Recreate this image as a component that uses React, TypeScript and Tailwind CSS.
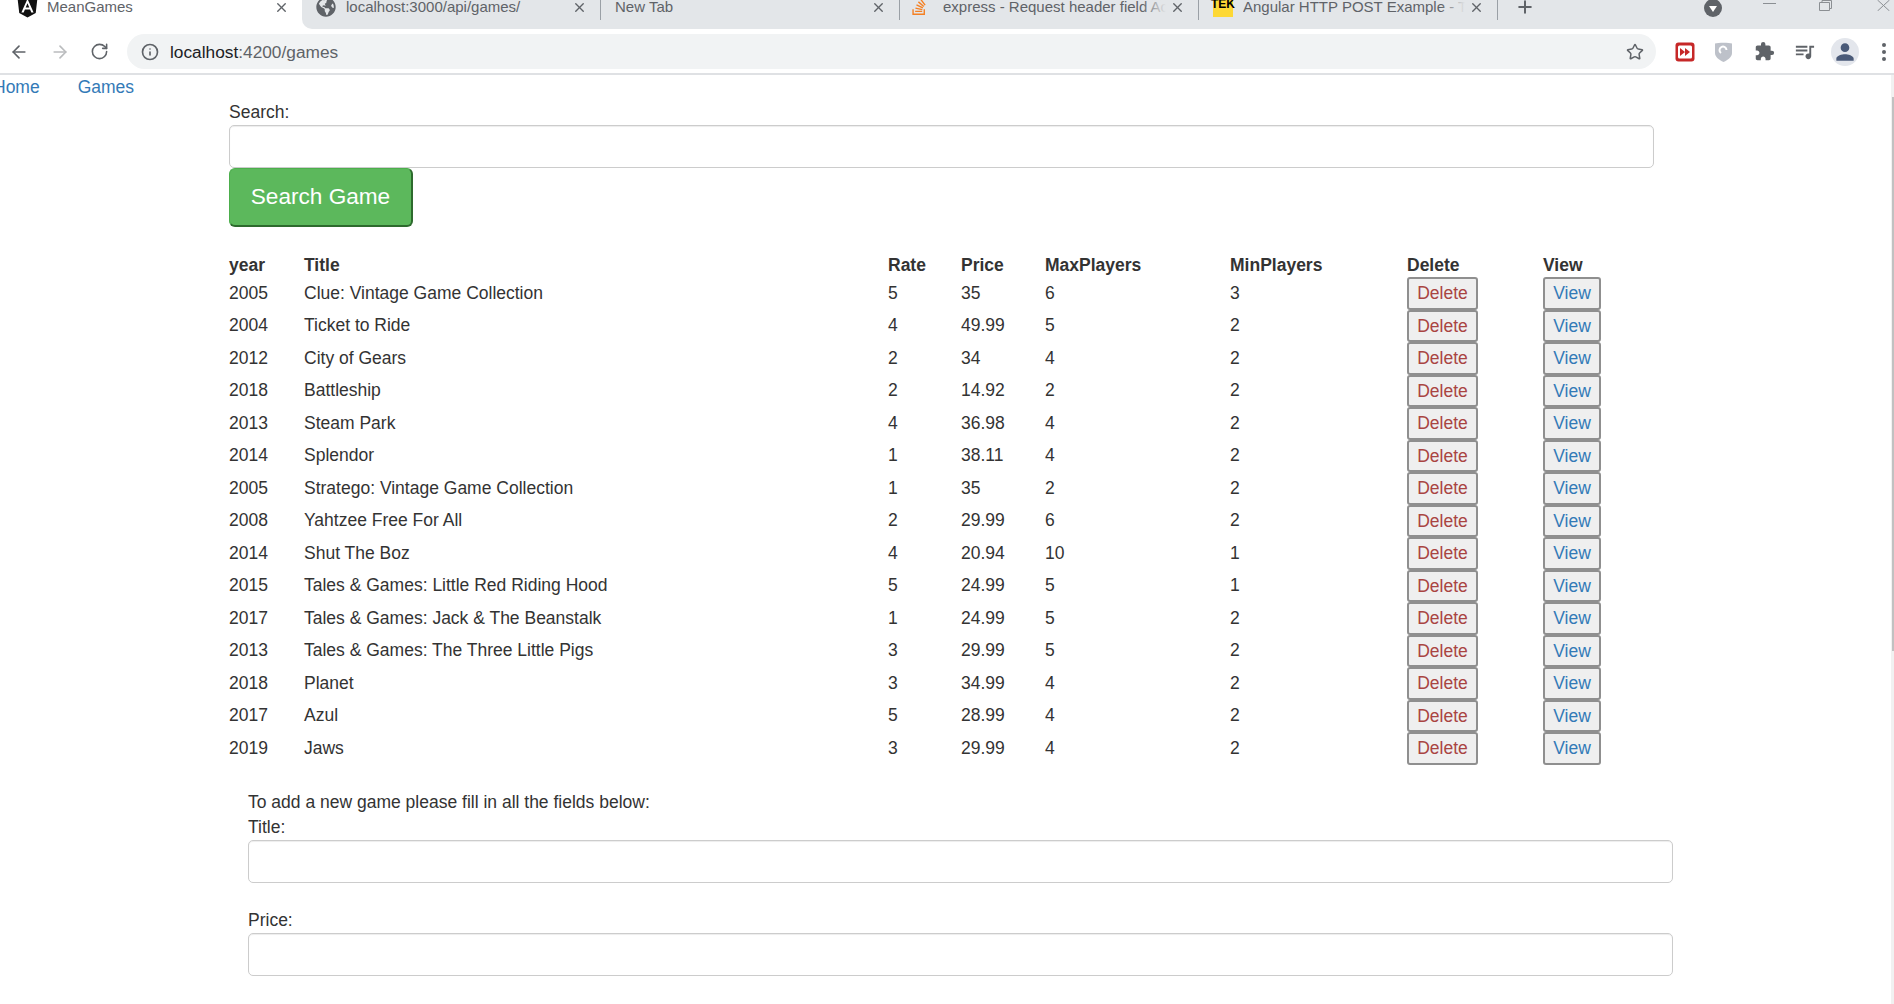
import type { ReactNode } from 'react'
import { ArrowLeft, ArrowRight, Info, Plus, RotateCw, Star, X } from 'lucide-react'
import { FaAngular, FaGlobeAmericas, FaStackOverflow } from 'react-icons/fa'
import { MdExtension, MdPerson, MdQueueMusic } from 'react-icons/md'

const games = [
  ['2005', 'Clue: Vintage Game Collection', '5', '35', '6', '3'],
  ['2004', 'Ticket to Ride', '4', '49.99', '5', '2'],
  ['2012', 'City of Gears', '2', '34', '4', '2'],
  ['2018', 'Battleship', '2', '14.92', '2', '2'],
  ['2013', 'Steam Park', '4', '36.98', '4', '2'],
  ['2014', 'Splendor', '1', '38.11', '4', '2'],
  ['2005', 'Stratego: Vintage Game Collection', '1', '35', '2', '2'],
  ['2008', 'Yahtzee Free For All', '2', '29.99', '6', '2'],
  ['2014', 'Shut The Boz', '4', '20.94', '10', '1'],
  ['2015', 'Tales & Games: Little Red Riding Hood', '5', '24.99', '5', '1'],
  ['2017', 'Tales & Games: Jack & The Beanstalk', '1', '24.99', '5', '2'],
  ['2013', 'Tales & Games: The Three Little Pigs', '3', '29.99', '5', '2'],
  ['2018', 'Planet', '3', '34.99', '4', '2'],
  ['2017', 'Azul', '5', '28.99', '4', '2'],
  ['2019', 'Jaws', '3', '29.99', '4', '2'],
]

function Tab({ title, icon, pad, gap, last, fade }: { title: string; icon?: ReactNode; pad: string; gap: string; last?: boolean; fade?: boolean }) {
  return (
    <div className={`flex h-[20px] w-[299px] shrink-0 items-start pr-[13px] ${pad} ${last ? '' : 'border-r border-[#9aa0a6]'}`}>
      <div className="flex h-[14px] w-full items-center">
        {icon}
        <div className={`flex min-w-0 flex-1 overflow-hidden whitespace-nowrap text-[15px] text-[#5f6368] ${gap}`}>
          <span>{title}</span>
        </div>
        {fade && <span className="relative -ml-[24px] h-[14px] w-[24px] shrink-0 bg-gradient-to-r from-transparent to-[#e3e6e9]" />}
        <X className="ml-[4px] h-[15px] w-[15px] shrink-0 text-[#5f6368]" strokeWidth={2.2} />
      </div>
    </div>
  )
}

function TabStrip() {
  return (
    <div className="flex h-[29px] shrink-0 overflow-hidden bg-white">
      <div className="flex h-[14px] w-[302px] shrink-0 items-center pl-[17px] pr-[13px]">
        <FaAngular className="h-[24px] w-[21px] shrink-0 text-[#111]" />
        <span className="ml-[9px] flex-1 text-[15px] text-[#5f6368]">MeanGames</span>
        <X className="h-[15px] w-[15px] text-[#5f6368]" strokeWidth={2.2} />
      </div>
      <div className="relative flex min-w-0 flex-1 rounded-bl-[10px] bg-[#e3e6e9]">
        <Tab title="localhost:3000/api/games/" pad="pl-[14px]" gap="ml-[10px]" icon={<FaGlobeAmericas className="h-[20px] w-[20px] shrink-0 text-[#5f6368]" />} />
        <Tab title="New Tab" pad="pl-[14px]" gap="" />
        <Tab title="express - Request header field Access" pad="pl-[10px]" gap="ml-[15px]" fade icon={<FaStackOverflow className="h-[18px] w-[18px] shrink-0 text-[#f48024]" />} />
        <Tab
          title="Angular HTTP POST Example - TekTutorials"
          pad="pl-[14px]"
          gap="ml-[10px]"
          fade
          icon={
            <span className="flex h-[20px] w-[20px] shrink-0 items-start justify-center bg-[#fdd835] text-[12px] font-bold leading-[14px] text-black">
              TEK
            </span>
          }
        />
        <div className="flex h-[14px] items-center pl-[17px]">
          <Plus className="h-[20px] w-[20px] text-[#5f6368]" strokeWidth={2.4} />
        </div>
        <div className="ml-auto flex h-[14px] items-center">
          <svg viewBox="0 0 18 18" className="mb-[-2px] h-[18px] w-[18px]">
            <circle cx="9" cy="9" r="9" fill="#5f6368" />
            <path d="M5 7h8l-4 6z" fill="#fff" />
          </svg>
          <svg viewBox="0 0 13 10" className="ml-[41px] mt-[-6px] h-[10px] w-[13px]">
            <path d="M0 4.5h13" stroke="#8b8f93" strokeWidth="1" />
          </svg>
          <svg viewBox="0 0 13 11" className="ml-[43px] mt-[-4px] h-[11px] w-[13px]">
            <path d="M0.5 2.5h10v8h-10zM3 2.5v-2h9.5v8h-2" fill="none" stroke="#8b8f93" strokeWidth="1" />
          </svg>
          <svg viewBox="0 0 13 11" className="ml-[45px] mr-[4px] mt-[-4px] h-[11px] w-[13px]">
            <path d="M0.5 0l12 11M12.5 0l-12 11" stroke="#8b8f93" strokeWidth="1" />
          </svg>
        </div>
      </div>
    </div>
  )
}

function Toolbar() {
  return (
    <div className="flex h-[46px] shrink-0 items-start border-b-2 border-[#dfe1e4] bg-white pt-[5px]">
      <div className="flex h-[35px] w-[127px] shrink-0 items-center">
        <ArrowLeft className="ml-[9px] h-[20px] w-[20px] text-[#5f6368]" strokeWidth={2} />
        <ArrowRight className="ml-[21px] h-[20px] w-[20px] text-[#babcbe]" strokeWidth={2} />
        <RotateCw className="ml-[20px] h-[19px] w-[19px] text-[#5f6368]" strokeWidth={2} />
      </div>
      <div className="flex h-[35px] w-[1529px] shrink-0 items-center rounded-full bg-[#f1f3f4] pl-[14px] pr-[12px]">
        <Info className="h-[18px] w-[18px] text-[#5f6368]" strokeWidth={2.2} />
        <span className="ml-[11px] flex-1 whitespace-nowrap text-[17.3px] text-[#5f6368]">
          <span className="text-[#202124]">localhost</span>:4200/games
        </span>
        <Star className="h-[18px] w-[18px] text-[#5f6368]" strokeWidth={2} />
      </div>
      <div className="flex h-[35px] items-center">
        <svg viewBox="0 0 20 20" className="ml-[19px] h-[20px] w-[20px]">
          <rect x="0.5" y="0.5" width="19" height="19" rx="3" fill="#c62828" />
          <rect x="3" y="3.5" width="14" height="13" rx="1.5" fill="#fff" />
          <path d="M5 6l5 4-5 4zM10 6l5 4-5 4z" fill="#c62828" />
        </svg>
        <svg viewBox="0 0 17 20" className="ml-[20px] h-[20px] w-[17px]">
          <path d="M0 1.5C3 .5 14 .5 17 1.5V11c0 4-4 7-8.5 9C4 18 0 15 0 11z" fill="#bdc1c9" />
          <path d="M6 11a3.5 3.5 0 1 1 5.5-3" fill="none" stroke="#fff" strokeWidth="2" />
        </svg>
        <MdExtension className="ml-[22px] h-[21px] w-[21px] text-[#5f6368]" />
        <MdQueueMusic className="ml-[18px] h-[23px] w-[23px] text-[#5f6368]" />
        <div className="ml-[15px] flex h-[28px] w-[28px] items-center justify-center rounded-full bg-[#e3e6ec]">
          <MdPerson className="h-[26px] w-[26px] text-[#4a5a78]" />
        </div>
        <div className="ml-[23px] flex flex-col gap-[3px]">
          <span className="h-[4px] w-[4px] rounded-full bg-[#5f6368]" />
          <span className="h-[4px] w-[4px] rounded-full bg-[#5f6368]" />
          <span className="h-[4px] w-[4px] rounded-full bg-[#5f6368]" />
        </div>
      </div>
    </div>
  )
}

function TextField({ className }: { className: string }) {
  return <input className={`block h-[43px] rounded-[5px] border border-[#ccc] bg-white shadow-[inset_0_1px_1px_rgba(0,0,0,0.075)] ${className}`} />
}

function RowButton({ label, className }: { label: string; className: string }) {
  return (
    <button className={`block h-[32.5px] rounded-[3px] border-2 border-[#8f8f8f] bg-[#efefef] text-center text-[17.5px] leading-[26px] ${className}`}>
      {label}
    </button>
  )
}

function GamesTable() {
  return (
    <table className="mt-[27px] w-[1380px] table-fixed border-collapse">
      <colgroup>
        <col className="w-[75px]" />
        <col className="w-[584px]" />
        <col className="w-[73px]" />
        <col className="w-[84px]" />
        <col className="w-[185px]" />
        <col className="w-[177px]" />
        <col className="w-[136px]" />
        <col />
      </colgroup>
      <thead>
        <tr className="h-[23px] text-left font-bold leading-[22px] text-[#333]">
          {['year', 'Title', 'Rate', 'Price', 'MaxPlayers', 'MinPlayers', 'Delete', 'View'].map((h) => (
            <th key={h} className="p-0 pb-[1px] font-bold">
              {h}
            </th>
          ))}
        </tr>
      </thead>
      <tbody>
        {games.map((g) => (
          <tr key={g[0] + g[1]} className="h-[32.5px]">
            {g.map((c, i) => (
              <td key={i} className="p-0 pb-[1px] align-middle">
                {c}
              </td>
            ))}
            <td className="p-0">
              <RowButton label="Delete" className="w-[71px] text-[#a94442]" />
            </td>
            <td className="p-0">
              <RowButton label="View" className="w-[58px] text-[#337ab7]" />
            </td>
          </tr>
        ))}
      </tbody>
    </table>
  )
}

export default function App() {
  return (
    <div className="flex h-screen flex-col overflow-hidden bg-white font-['Liberation_Sans',Arial,sans-serif] text-[17.5px] leading-[24px] text-[#333]">
      <TabStrip />
      <Toolbar />
      <div className="flex min-h-0 flex-1">
        <div className="min-w-0 flex-1">
          <nav className="-ml-[7px] flex h-[23px] items-center gap-[38px] text-[#337ab7]">
            <a>Home</a>
            <a>Games</a>
          </nav>
          <main className="pl-[229px]">
            <label className="block h-[27px] pt-[2px]">Search:</label>
            <TextField className="w-[1425px]" />
            <button className="block h-[59px] w-[184px] rounded-[6px] border border-b-2 border-r-2 border-[#4cae4c] border-b-[#2d6a2d] border-r-[#2d6a2d] bg-[#5cb85c] text-[22.6px] text-white">
              Search Game
            </button>
            <GamesTable />
            <section className="pl-[19px] pt-[25px]">
              <p className="h-[25px]">To add a new game please fill in all the fields below:</p>
              <label className="block h-[25px]">Title:</label>
              <TextField className="w-[1425px]" />
              <label className="mt-[25px] block h-[25px]">Price:</label>
              <TextField className="w-[1425px]" />
            </section>
          </main>
        </div>
        <div className="w-[3px] shrink-0 bg-[#f1f1f1] pt-[22px]">
          <div className="ml-auto h-[554px] w-[2px] bg-[#c1c1c1]" />
        </div>
      </div>
    </div>
  )
}
